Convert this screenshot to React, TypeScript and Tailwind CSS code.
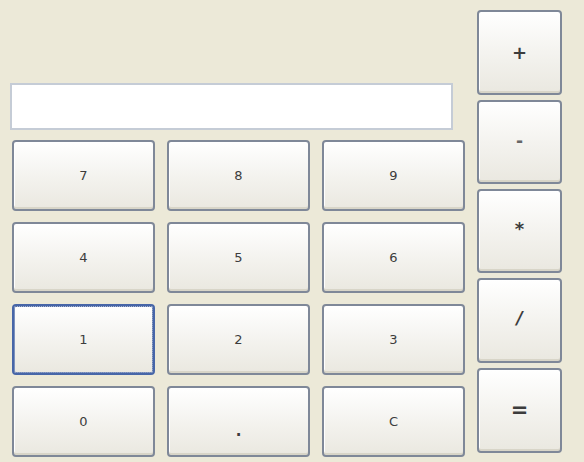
import React from "react";

const keys = ["7", "8", "9", "4", "5", "6", "1", "2", "3", "0", ".", "C"];

const ops = [
  { label: "+", h: "h-[85px]", cls: "text-[18px] font-bold" },
  { label: "-", h: "h-[84px]", cls: "text-[17px] font-bold text-[#666]" },
  { label: "*", h: "h-[84px]", cls: "text-[18px] font-bold -mt-[6px]" },
  { label: "/", h: "h-[85px]", cls: "text-[17px] font-bold italic -mt-[4px]" },
  { label: "=", h: "h-[85px]", cls: "text-[21px] font-bold" },
];

const btnBase =
  "flex items-center justify-center rounded-[4px] border-2 border-[#7f8898] bg-gradient-to-b from-[#ffffff] via-[#f4f3ef] to-[#eae8e0] shadow-[inset_0_-2px_0_#d8d5c8,inset_1px_1px_0_#ffffff] text-[#3c3c3c]";

const App: React.FC = () => {
  return (
    <div
      className="w-[584px] h-[462px] bg-[#ece9d8] flex"
      style={{ fontFamily: '"DejaVu Sans", Tahoma, sans-serif' }}
    >
      <div className="pl-[10px] pt-[83px] flex flex-col">
        <div className="w-[443px] h-[47px] bg-white border-2 border-[#c5ccd6]" />
        <div className="mt-[10px] ml-[2px] grid grid-cols-[repeat(3,143px)] gap-x-[12px] gap-y-[11px]">
          {keys.map((k) => (
            <button
              key={k}
              type="button"
              className={`${btnBase} w-[143px] h-[71px] text-[13px] ${
                k === "1"
                  ? "border-[#4766a8] shadow-[inset_0_0_0_1px_#9fb4e0] outline-1 outline-dotted outline-[#5b6f99] -outline-offset-[3px]"
                  : ""
              }`}
            >
              <span className={k === "." ? "mt-[20px] font-bold text-[15px]" : ""}>
                {k}
              </span>
            </button>
          ))}
        </div>
      </div>
      <div className="ml-[12px] pt-[10px] flex flex-col gap-[5px]">
        {ops.map((o) => (
          <button
            key={o.label}
            type="button"
            className={`${btnBase} w-[85px] ${o.h}`}
          >
            <span className={o.cls}>{o.label}</span>
          </button>
        ))}
      </div>
    </div>
  );
};

export default App;
